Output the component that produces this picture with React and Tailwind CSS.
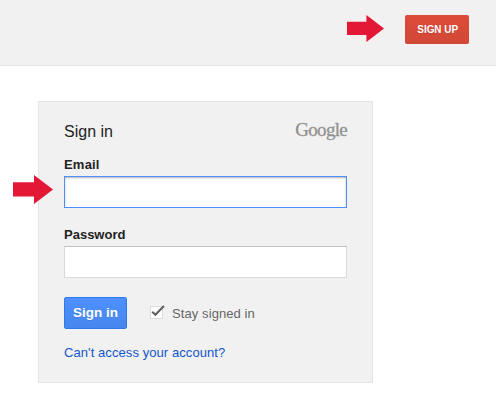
import { useState } from "react";

function Arrow({ className }) {
  return (
    <svg className={className} viewBox="0 0 40 29" preserveAspectRatio="none" fill="#e31837">
      <path d="M0 7.2H21V0L40 14.5L21 29V21.5H0Z" />
    </svg>
  );
}

export default function SignInPage() {
  const [staySignedIn, setStaySignedIn] = useState(true);

  return (
    <div className="bg-white h-[415px] w-[496px] overflow-hidden font-['Liberation_Sans',Arial,sans-serif] text-[13px] text-[#222]">
      <div className="flex h-[66px] items-start justify-end border-b border-[#e5e5e5] bg-[#f1f1f1] pt-[15px] pr-[27px]">
        <Arrow className="mr-[21px] h-[27px] w-[37px]" />
        <button className="flex h-[29px] w-16 justify-center rounded-xs bg-linear-to-b from-[#dd4b39] to-[#d14836] text-[11.5px] leading-[29px] font-bold whitespace-nowrap text-white [text-shadow:0_1px_rgba(0,0,0,0.1)]">
          <span className="ml-px inline-block origin-center scale-x-[0.86]">SIGN UP</span>
        </button>
      </div>

      <div className="relative mt-[35px] ml-[38px] h-[282px] w-[335px] border border-[#e5e5e5] bg-[#f1f1f1] px-[25px] pt-5">
        <Arrow className="absolute top-[73px] -left-[26px] h-[29px] w-10" />
        <form>
          <div className="flex h-5 items-start justify-between">
            <h2 className="text-[16px] leading-5">Sign in</h2>
            <span className="font-['Liberation_Serif',serif] text-[19px] leading-4 tracking-[-0.7px] text-[#8f8f8f] [-webkit-text-stroke:0.3px_#999]">Google</span>
          </div>

          <div className="mt-[13px]">
            <label htmlFor="email" className="block h-5 leading-5 font-bold tracking-[0.2px]">Email</label>
            <input
              type="text"
              id="email"
              name="email"
              className="mt-px block h-8 w-full border border-[#4d90fe] bg-white px-2 shadow-[inset_0_1px_2px_rgba(0,0,0,0.3)] outline-none"
            />
          </div>

          <div className="mt-[17px]">
            <label htmlFor="password" className="block h-5 leading-5 font-bold">Password</label>
            <input
              type="password"
              id="password"
              name="password"
              className="mt-px block h-8 w-full border border-[#d9d9d9] border-t-[#c0c0c0] bg-white px-2 outline-none"
            />
          </div>

          <div className="mt-[19px] flex h-8 items-center">
            <button
              type="button"
              className="h-8 w-[63px] rounded-xs border border-[#3079ed] bg-linear-to-b from-[#4d90fe] to-[#4787ed] text-[13.5px] font-bold whitespace-nowrap text-white [text-shadow:0_1px_rgba(0,0,0,0.1)]"
            >
              Sign in
            </button>
            <label className="ml-[23px] flex items-center text-[#666]">
              <input
                type="checkbox"
                checked={staySignedIn}
                onChange={() => setStaySignedIn(!staySignedIn)}
                className="sr-only"
              />
              <svg className="h-4 w-4" viewBox="0 0 16 16" fill="none">
                <rect x="0.5" y="1.5" width="12" height="12" fill="#fff" stroke="#dcdcdc" />
                {staySignedIn && <path d="M2.2 6.8L5.4 9.8L13.9 1" stroke="#606060" strokeWidth="2.1" />}
              </svg>
              <span className="mt-px ml-[6px] tracking-[0.09px]">Stay signed in</span>
            </label>
          </div>

          <a href="#" className="mt-[14px] block leading-5 tracking-[0.08px] text-[#15c]">Can't access your account?</a>
        </form>
      </div>
    </div>
  );
}
